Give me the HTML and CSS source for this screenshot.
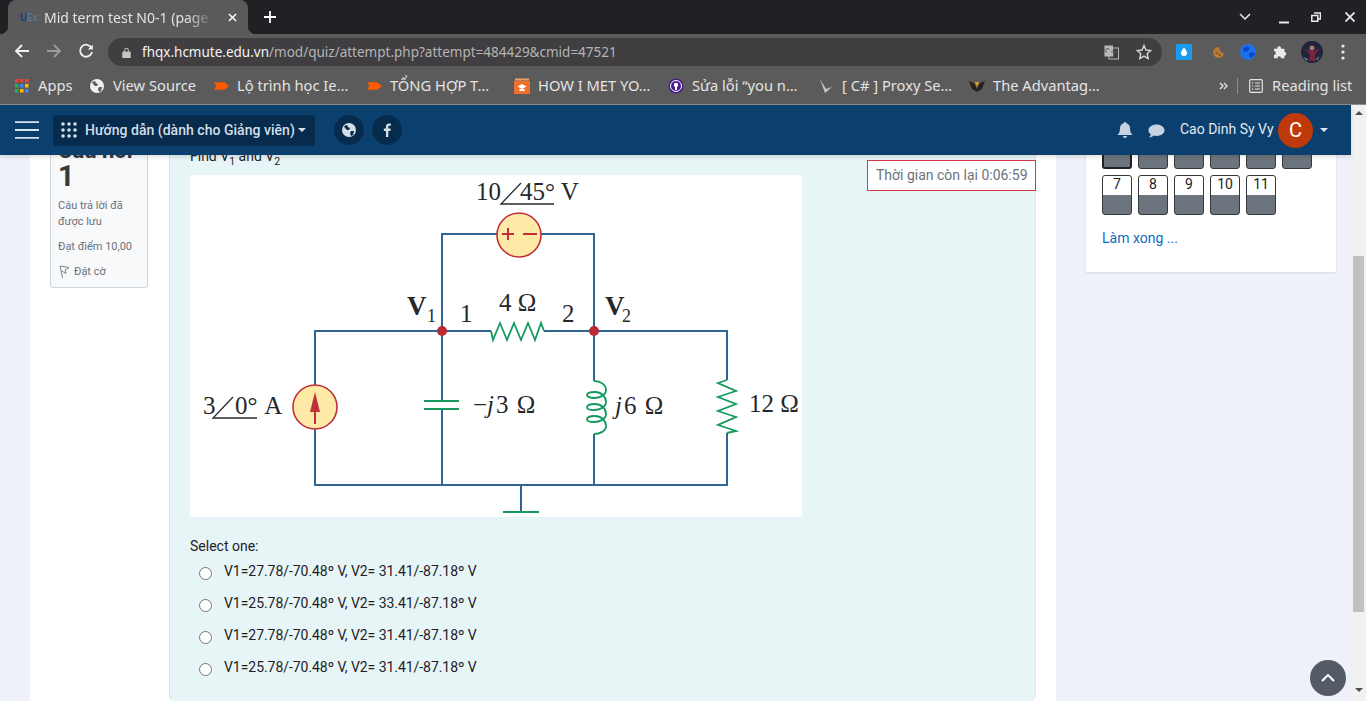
FILE: index.html
```html
<!DOCTYPE html>
<html lang="vi">
<head>
<meta charset="utf-8">
<title>Mid term test N0-1</title>
<link rel="stylesheet" href="styles.css">
</head>
<body>
<header class="browser">
  <div class="tabstrip">
    <div class="tab">
      <span class="favicon"><b>U</b><i>Ex</i></span>
      <span class="tab-title">Mid term test N0-1 (page 1 of 1)</span>
      <svg class="tab-close" viewBox="0 0 10 10"><path d="M1 1l8 8M9 1l-8 8"/></svg>
    </div>
    <svg class="new-tab" viewBox="0 0 12 12"><path d="M6 0v12M0 6h12"/></svg>
    <div class="win-controls">
      <svg class="win-chevron" viewBox="0 0 12 8"><path d="M1 1l5 5 5-5"/></svg>
      <svg class="win-min" viewBox="0 0 10 10"><path d="M0 8.5h10"/></svg>
      <svg class="win-max" viewBox="0 0 10 10"><path d="M3 1h6.5v6H7M.8 3.5h6v5.8h-6z"/></svg>
      <svg class="win-close" viewBox="0 0 10 10"><path d="M.5.5l9 9M9.500.5l-9 9"/></svg>
    </div>
  </div>
  <div class="toolbar">
    <svg class="tb-icon" viewBox="0 0 16 16"><path d="M15 8H2M8 2L2 8l6 6"/></svg>
    <svg class="tb-icon tb-dim" viewBox="0 0 16 16"><path d="M1 8h13M8 2l6 6-6 6"/></svg>
    <svg class="tb-icon" viewBox="0 0 16 16"><path d="M13.500 5A6 6 0 1 0 14 9"/><path class="solid" d="M14.800 1.500v5h-5z"/></svg>
    <div class="omnibox">
      <svg class="lock" viewBox="0 0 10 12"><path d="M1 5h8a.7.7 0 0 1 .7.700v5.600a.7.7 0 0 1-.7.700H1a.7.7 0 0 1-.7-.7V5.700A.7.7 0 0 1 1 5zM2.500 5V3.200a2.500 2.500 0 0 1 5 0V5H6.500V3.200a1.500 1.500 0 0 0-3 0V5z"/></svg>
      <span class="url"><span class="url-host">fhqx.hcmute.edu.vn</span>/mod/quiz/attempt.php?attempt=484429&amp;cmid=47521</span>
      <svg class="translate" viewBox="0 0 15 15"><rect x="5" y="3" width="9.500" height="11" fill="none" stroke="#b9b9b9"/><rect x=".5" y=".5" width="8.500" height="11" fill="#b9b9b9"/><path d="M3 7.500a2 2 0 1 1 2.500-2.500M7 7h5M9.500 6v6" fill="none" stroke="#5b5b5b"/></svg>
      <svg class="star" viewBox="0 0 16 16"><path d="M8 1.500l2 4.500 4.800.5-3.600 3.200 1 4.800L8 12.100 3.800 14.500l1-4.800L1.200 6.500 6 6z"/></svg>
    </div>
    <div class="extensions">
      <svg class="ext" viewBox="0 0 16 16"><rect width="16" height="16" rx="1.500" fill="#1b9bf0"/><path d="M8 3.500c2 2.600 3 4 3 5.500a3 3 0 0 1-6 0c0-1.500 1-2.900 3-5.500z" fill="#fff"/></svg>
      <svg class="ext ext-cookie" viewBox="0 0 16 16"><path d="M9 3a5.500 5.500 0 1 0 5 6.500L11 8 9.500 6z" fill="#b9793a"/><circle cx="6.500" cy="9" r="1" fill="#6f431a"/><circle cx="9.500" cy="11" r="1" fill="#6f431a"/></svg>
      <svg class="ext ext-globe" viewBox="0 0 16 16"><circle cx="8" cy="8" r="8" fill="#1a73e8"/><path d="M3 4l4-2 3 2-2 3-4 1zM9 9l5-1 1 3-4 3-2-2z" fill="#0d47c9"/></svg>
      <svg class="ext ext-puzzle" viewBox="0 0 16 16"><path d="M1 6h3.500a2 2 0 0 1 0-.5 2 2 0 1 1 4 0V6H12v3.300a2 2 0 1 1 0 4V16H8.500a2 2 0 1 0-4 0H1v-3.500a2 2 0 1 0 0-4z" fill="#e8eaed" transform="translate(1 -1) scale(.95)"/></svg>
      <svg class="ext ext-profile" viewBox="0 0 22 22"><circle cx="11" cy="11" r="11" fill="#20243a"/><path d="M3 8l6 2 4 0 6-3-5 6 1 7H8l1-7z" fill="#7a2540"/><circle cx="11" cy="7" r="2.500" fill="#a8796a"/><path d="M2 16l5 2-1 2zM18 15l-3 3 2 1z" fill="#6a8a9a"/></svg>
      <svg class="ext-menu" viewBox="0 0 4 16"><circle cx="2" cy="2" r="1.600"/><circle cx="2" cy="8" r="1.600"/><circle cx="2" cy="14" r="1.600"/></svg>
    </div>
  </div>
  <nav class="bookmarks">
    <div class="bm bm-apps">
      <svg class="bm-ic" viewBox="0 0 14 14"><rect width="3.500" height="3.500" fill="#ea4335"/><rect x="5" width="3.500" height="3.500" fill="#ea4335"/><rect x="10" width="3.500" height="3.500" fill="#ea4335"/><rect y="5" width="3.500" height="3.500" fill="#34a853"/><rect x="5" y="5" width="3.500" height="3.500" fill="#4285f4"/><rect x="10" y="5" width="3.500" height="3.500" fill="#fbbc05"/><rect y="10" width="3.500" height="3.500" fill="#34a853"/><rect x="5" y="10" width="3.500" height="3.500" fill="#fbbc05"/><rect x="10" y="10" width="3.500" height="3.500" fill="#4285f4"/></svg>
      <span>Apps</span>
    </div>
    <div class="bm bm-src">
      <svg class="bm-ic" viewBox="0 0 14 14"><circle cx="7" cy="7" r="7" fill="#eceff1"/><path d="M2 3l3-1 1 2 2 1-1 2H5L3 5zM9 8l3 0-1 4-2 1-1-3z" fill="#5b5b5b"/></svg>
      <span>View Source</span>
    </div>
    <div class="bm bm-lo">
      <svg class="bm-ic" viewBox="0 0 16 10"><path d="M0 1h11l5 4-5 4H0l2.500-4z" fill="#ff5a00"/></svg>
      <span>Lộ trình học Ie…</span>
    </div>
    <div class="bm bm-th">
      <svg class="bm-ic" viewBox="0 0 16 10"><path d="M0 1h11l5 4-5 4H0l2.500-4z" fill="#ff5a00"/></svg>
      <span>TỔNG HỢP T…</span>
    </div>
    <div class="bm bm-how">
      <svg class="bm-ic" viewBox="0 0 16 16"><path d="M0 3h16v13H0z" fill="#f0702a"/><path d="M1 .5h14v2H1z" fill="#f3a26b"/><path d="M8 6l4.500 2.500L8 11 3.500 8.500zM5.500 11h5v2h-5z" fill="#fff"/></svg>
      <span>HOW I MET YO…</span>
    </div>
    <div class="bm bm-fix">
      <svg class="bm-ic" viewBox="0 0 16 16"><circle cx="8" cy="8" r="7.500" fill="#4a1a8c"/><circle cx="8" cy="8" r="5.500" fill="none" stroke="#fff"/><circle cx="8" cy="7" r="2.200" fill="#fff"/><path d="M7 9h2v3H7z" fill="#fff"/></svg>
      <span>Sửa lỗi “you n…</span>
    </div>
    <div class="bm bm-proxy">
      <svg class="bm-ic" viewBox="0 0 16 16"><path d="M2 1l5 14 7-6-6 2z" fill="#c8c8c8"/></svg>
      <span>[ C# ] Proxy Se…</span>
    </div>
    <div class="bm bm-adv">
      <svg class="bm-ic" viewBox="0 0 16 16"><path d="M0 3l5 2 3 6 3-6 5-2-3 8-5 3-5-3z" fill="#2a2018"/><path d="M6 4h4l-2 5z" fill="#e0a030"/></svg>
      <span>The Advantag…</span>
    </div>
    <div class="bm-right">
      <svg class="bm-more" viewBox="0 0 9 8"><path d="M1 1l3 3-3 3M5 1l3 3-3 3"/></svg>
      <i class="bm-divider"></i>
      <svg class="bm-reading" viewBox="0 0 14 14"><rect x=".7" y=".7" width="12.600" height="12.600" rx="1"/><path d="M3 4h1.500M6 4h5M3 7h1.500M6 7h5M3 10h1.500M6 10h5"/></svg>
      <span>Reading list</span>
    </div>
  </nav>
</header>

<div class="viewport">
  <div class="site">
    <div class="navbar">
      <svg class="burger" viewBox="0 0 24 18"><path d="M0 1.200h24M0 9h24M0 16.800h24"/></svg>
      <button class="guide">
        <svg class="dots" viewBox="0 0 16 16"><circle cx="2" cy="2" r="1.800"/><circle cx="8" cy="2" r="1.800"/><circle cx="14" cy="2" r="1.800"/><circle cx="2" cy="8" r="1.800"/><circle cx="8" cy="8" r="1.800"/><circle cx="14" cy="8" r="1.800"/><circle cx="2" cy="14" r="1.800"/><circle cx="8" cy="14" r="1.800"/><circle cx="14" cy="14" r="1.800"/></svg>
        <span>Hướng dẫn (dành cho Giảng viên)</span>
        <i class="caret"></i>
      </button>
      <span class="round">
        <svg viewBox="0 0 14 14"><circle cx="7" cy="7" r="7" fill="#d3dee8"/><path d="M2 3l3-1 1 2 2 1-1 2H5L3 5zM9 8l3 0-1 4-2 1-1-3z" fill="#062b4d"/></svg>
      </span>
      <span class="round">
        <svg viewBox="0 0 10 16"><path d="M6.500 16V9h2.400l.4-2.800H6.500V4.500c0-.8.2-1.400 1.400-1.400h1.500V.6C9.100.6 8.300.5 7.300.5 5.200.5 3.800 1.800 3.800 4.100v2.100H1.400V9h2.400v7z" fill="#d3dee8"/></svg>
      </span>
      <div class="nav-right">
        <svg class="bell" viewBox="0 0 16 16"><path d="M8 0a1.200 1.200 0 0 1 1.200 1.300C11.500 1.800 13 3.700 13 6c0 4 1 5.500 2.500 7H.5C2 11.500 3 10 3 6c0-2.300 1.500-4.200 3.800-4.700A1.200 1.200 0 0 1 8 0zM6 14h4a2 2 0 0 1-4 0z"/></svg>
        <svg class="chat" viewBox="0 0 17 14"><path d="M8.500.5c4.500 0 8 2.500 8 5.700s-3.500 5.700-8 5.700c-1 0-1.900-.1-2.700-.3C4.600 12.700 3 13.500 1 13.500c1-1 1.700-2.100 1.800-3.200C1.300 9.300.5 7.800.5 6.200.5 3 4 .5 8.500.5z"/></svg>
        <span class="user">Cao Dinh Sy Vy</span>
        <span class="avatar">C</span>
        <i class="caret caret-user"></i>
      </div>
    </div>

    <main class="page">
      <section class="quiz-card">
        <aside class="qinfo">
          <h3 class="qno">Câu hỏi <span class="qno-num">1</span></h3>
          <p class="qstate">Câu trả lời đã được lưu</p>
          <p class="qgrade">Đạt điểm 10,00</p>
          <p class="qflag">
            <svg viewBox="0 0 12 14"><path d="M2 1l9 1.500-4 2.500 1 3.500L3 5.500M2 1l2.500 12"/></svg>
            <span>Đặt cờ</span>
          </p>
        </aside>
        <article class="qcontent">
          <div class="timer">Thời gian còn lại 0:06:59</div>
          <p class="qtext">Find V<sub>1</sub> and V<sub>2</sub></p>
          <svg class="circuit" viewBox="190 175 612 342">
            <path class="wire" d="M497 234H442V485M541 234H594V381M594 434V485M315 386V331H491M544 331H727V380M727 433V485H315V429M442 401V331M521 485V512"/>
            <path class="comp" d="M491 331L493 340L500 323L507 340L514 323L521 340L528 323L535 340L541 323L544 331"/>
            <path class="comp" d="M727 380L718 383L736 391L718 397L736 404L718 411L736 417L718 425L736 431L727 433"/>
            <path class="comp" d="M594 381C601 381 606 385 606 390C606 395 600 398 594 398C589 398 587 396 587 395C587 393 591 392 595 392C601 392 606 396 606 402C606 407 600 410 594 410C589 410 587 409 587 407.500C587 405 591 404 595 404C601 404 606 408 606 414C606 419 600 422 594 422C589 422 587 421 587 419.500C587 417 591 416 595 416C601 416 606 420 606 426C606 431 600 434 594 434"/>
            <path class="cap-bg" d="M442 401V409"/>
            <path class="comp" d="M424 401H459M424 409H459M503 512H539"/>
            <circle class="source" cx="519" cy="235" r="22"/>
            <path class="mark" d="M502 234H514M508 228V240M523 234H537"/>
            <circle class="source" cx="315" cy="407" r="22"/>
            <path class="mark" d="M315 405V424"/>
            <path class="arrow" d="M315 392L320 412H310z"/>
            <circle class="node" cx="442" cy="331" r="5"/>
            <circle class="node" cx="594" cy="331" r="5"/>
            <path class="phasor" d="M521 183L501 204H554M233 397L213 418H257"/>
            <text class="lbl" x="476" y="200">10</text>
            <text class="lbl" x="520" y="200">45° V</text>
            <text class="lbl lbl-b" x="407" y="315">V</text>
            <text class="lbl lbl-s" x="427" y="322">1</text>
            <text class="lbl" x="460" y="322">1</text>
            <text class="lbl" x="499" y="311">4 Ω</text>
            <text class="lbl" x="562" y="322">2</text>
            <text class="lbl lbl-b" x="605" y="315">V</text>
            <text class="lbl lbl-s" x="622" y="322">2</text>
            <text class="lbl" x="203" y="414">3</text>
            <text class="lbl lbl-a" x="235" y="414">0° A</text>
            <text class="lbl lbl-w" x="473" y="413">−<tspan class="lbl-i">j</tspan>3 Ω</text>
            <text class="lbl lbl-w" x="615" y="414"><tspan class="lbl-i">j</tspan>6 Ω</text>
            <text class="lbl" x="749" y="412">12 Ω</text>
          </svg>
          <p class="select">Select one:</p>
          <ul class="answers">
            <li><i class="radio"></i><span>V1=27.78/-70.48º V, V2= 31.41/-87.18º V</span></li>
            <li><i class="radio"></i><span>V1=25.78/-70.48º V, V2= 33.41/-87.18º V</span></li>
            <li><i class="radio"></i><span>V1=27.78/-70.48º V, V2= 31.41/-87.18º V</span></li>
            <li><i class="radio"></i><span>V1=25.78/-70.48º V, V2= 31.41/-87.18º V</span></li>
          </ul>
        </article>
      </section>
      <aside class="qnav">
        <div class="qnav-grid">
          <a class="qbtn qbtn-current"></a><a class="qbtn"></a><a class="qbtn"></a><a class="qbtn"></a><a class="qbtn"></a><a class="qbtn"></a>
          <a class="qbtn">7</a><a class="qbtn">8</a><a class="qbtn">9</a><a class="qbtn">10</a><a class="qbtn">11</a>
        </div>
        <a class="finish">Làm xong ...</a>
      </aside>
      <a class="totop"><svg viewBox="0 0 14 8"><path d="M1 7l6-6 6 6"/></svg></a>
    </main>
  </div>
  <div class="scrollbar">
    <i class="sb-up"></i>
    <i class="sb-thumb"></i>
    <i class="sb-down"></i>
  </div>
</div>
</body>
</html>
```

FILE: styles.css
```css
* { box-sizing: border-box; }
html, body { margin: 0; padding: 0; height: 701px; overflow: hidden; }
body { font-family: Roboto, "Liberation Sans", sans-serif; font-size: 14px; color: #1d2125; background: #eef1f9; }
svg { display: block; flex: none; }
p, h3, ul { margin: 0; padding: 0; }

/* browser chrome */
.browser { font-family: "Noto Sans", "Open Sans", sans-serif; color: #e8eaed; }
.tabstrip { height: 34px; background: #202124; display: flex; align-items: flex-start; padding-left: 8px; position: relative; }
.tab { position: relative; width: 240px; height: 34px; background: #5a5a5a; border-radius: 8px 8px 0 0; display: flex; align-items: center; padding-left: 12px; }
.tab::before, .tab::after { content: ""; position: absolute; bottom: 0; width: 8px; height: 8px; }
.tab::before { left: -8px; background: radial-gradient(circle at 0 0, #202124 8px, #5a5a5a 8.5px); }
.tab::after { right: -8px; background: radial-gradient(circle at 100% 0, #202124 8px, #5a5a5a 8.5px); }
.favicon { width: 16px; margin-right: 8px; font: bold 10px "Liberation Sans", sans-serif; color: #123f80; white-space: nowrap; display: flex; }
.favicon i { font-style: normal; color: #5d7590; margin-left: -1px; letter-spacing: -.5px; }
.tab-title { width: 170px; white-space: nowrap; overflow: hidden; font-size: 14px; color: #e3e3e3; -webkit-mask-image: linear-gradient(to right, #000 84%, transparent 100%); mask-image: linear-gradient(to right, #000 84%, transparent 100%); }
.tab-close { width: 9px; height: 9px; margin-left: 14px; fill: none; stroke: #fff; stroke-width: 1.600; }
.new-tab { width: 12px; height: 12px; margin: 11px 0 0 16px; fill: none; stroke: #fff; stroke-width: 1.800; }
.win-controls { margin-left: auto; display: flex; align-items: center; height: 34px; }
.win-controls svg { fill: none; stroke: #e8eaed; }
.win-chevron { width: 12px; height: 8px; margin-right: 28px; stroke-width: 1.500; }
.win-min { width: 10px; height: 10px; margin-right: 22px; stroke-width: 2; margin-top: 3px; }
.win-max { width: 10px; height: 10px; margin-right: 24px; stroke-width: 1.500; }
.win-close { width: 10px; height: 10px; margin-right: 11px; stroke-width: 1.800; }

.toolbar { height: 34px; background: #5b5b5b; display: flex; align-items: center; padding-left: 14px; }
.tb-icon { width: 16px; height: 16px; margin-right: 16px; fill: none; stroke: #f1f1f1; stroke-width: 1.800; }
.tb-icon .solid { fill: #f1f1f1; stroke: none; }
.tb-dim { stroke: #9c9c9c; }
.omnibox { width: 1054px; height: 28px; margin-left: -2px; margin-top: 2px; border-radius: 14px; background: #403e41; display: flex; align-items: center; padding-left: 14px; }
.lock { width: 9px; height: 11px; fill: #c5c5c5; margin-right: 11px; }
.url { font-size: 13.500px; color: #b4b4b4; white-space: nowrap; flex: 1; }
.url-host { color: #f3f3f3; }
.translate { width: 15px; height: 15px; margin-right: 17px; }
.star { width: 16px; height: 16px; margin-right: 10px; fill: none; stroke: #d6d6d6; stroke-width: 1.400; }
.extensions { display: flex; align-items: center; padding-left: 14px; margin-top: 2px; }
.ext { width: 16px; height: 16px; margin-right: 16px; }
.ext-cookie { margin-left: 2px; margin-right: 14px; }
.ext-globe { margin-right: 16px; }
.ext-profile { width: 22px; height: 22px; margin-left: 13px; margin-right: 18px; }
.ext-puzzle { margin-right: 0; }
.ext-menu { width: 4px; height: 16px; fill: #ececec; }

.bookmarks { height: 37px; background: #5b5b5b; border-bottom: 1px solid #8b8b8b; display: grid; grid-template-columns: 75px 124px 153px 147px 154px 150px 151px 250px 1fr; padding-left: 15px; align-items: center; font-size: 14.700px; color: #e4e4e4; }
.bookmarks span { margin-top: -2px; }
.bm { display: flex; align-items: center; gap: 8px; white-space: nowrap; }
.bm-apps, .bm-src { gap: 9px; }
.bm-ic { width: 14px; height: 14px; }
.bm-lo .bm-ic, .bm-th .bm-ic { width: 15px; height: 10px; }
.bm-how .bm-ic, .bm-fix .bm-ic, .bm-proxy .bm-ic, .bm-adv .bm-ic { width: 16px; height: 16px; }
.bm-right { display: flex; align-items: center; white-space: nowrap; }
.bm-more { width: 9px; height: 8px; fill: none; stroke: #e4e4e4; stroke-width: 1.400; margin-right: 9px; }
.bm-divider { width: 1px; height: 16px; background: #8d8d8d; margin-right: 11px; }
.bm-reading { width: 14px; height: 14px; fill: none; stroke: #e4e4e4; stroke-width: 1.200; margin-right: 9px; }

/* page */
.viewport { display: flex; height: 596px; }
.site { width: 1351px; display: flex; flex-direction: column; }
.navbar { height: 50px; flex: none; background: #0a3f6e; display: flex; align-items: center; padding-left: 15px; position: relative; z-index: 2; box-shadow: 0 2px 4px rgba(0,0,0,.12); }
.burger { width: 24px; height: 18px; fill: none; stroke: #d9e3ec; stroke-width: 1.800; margin-right: 14px; }
.guide { width: 262px; height: 31px; border: 0; border-radius: 3px; background: #062b4d; color: #d3dee8; font: 500 14px Roboto, sans-serif; letter-spacing: .03px; display: flex; align-items: center; padding: 0 0 0 8px; margin-right: 19px; }
.dots { width: 16px; height: 16px; fill: #d3dee8; margin-right: 8px; }
.caret { width: 0; height: 0; border-style: solid; border-width: 4px 4px 0; border-color: #d3dee8 transparent transparent; margin-left: 3px; }
.round { width: 30px; height: 30px; border-radius: 50%; background: #062b4d; display: flex; align-items: center; justify-content: center; margin-right: 8px; }
.round svg { width: 14px; height: 14px; }
.nav-right { margin-left: auto; display: flex; align-items: center; color: #e2e9f0; }
.bell { width: 16px; height: 16px; fill: #c5d3e0; margin-right: 15px; }
.chat { width: 17px; height: 14px; fill: #c5d3e0; margin-right: 15px; margin-top: 1px; }
.user { width: 98px; white-space: nowrap; margin-top: -2px; }
.avatar { width: 35px; height: 35px; border-radius: 50%; background: #c0390b; color: #fff; font-size: 20px; display: flex; align-items: center; justify-content: center; }
.caret-user { border-color: #e2e9f0 transparent transparent; margin: 0 23px 0 7px; }

.page { flex: 1; min-height: 0; display: flex; align-items: flex-start; padding-left: 30px; position: relative; overflow: hidden; }
.quiz-card { width: 1026px; height: 546px; background: #fff; padding: 0 20px 0 20px; display: flex; align-items: flex-start; flex: none; }
.qinfo { width: 98px; height: 159px; flex: none; margin-top: -26px; background: #f8f9fa; border: 1px solid #ced4da; border-radius: 3px; padding: 8px 7px; }
.qno { font-size: 22px; font-weight: 700; line-height: 25px; color: #343a40; }
.qno-num { display: block; font-size: 29px; line-height: 27px; }
.qstate { font-size: 11px; line-height: 16px; color: #6a737b; margin-top: 8px; }
.qgrade { font-size: 11px; line-height: 16px; color: #6a737b; margin-top: 9px; }
.qflag { font-size: 11px; line-height: 16px; color: #6a737b; margin-top: 9px; display: flex; align-items: center; gap: 4px; }
.qflag svg { width: 12px; height: 14px; fill: none; stroke: #7d858c; }
.qcontent { position: relative; width: 867px; height: 546px; margin-left: 21px; background: #e7f5f7; border-left: 1px solid #cfe3e7; border-right: 1px solid #dbeaee; border-radius: 0 0 6px 6px; padding: 0 20px; }
.timer { position: absolute; top: 5px; right: -1px; width: 169px; height: 31px; background: #fff; border: 1px solid #dc3545; color: #6a737b; font-size: 14px; line-height: 29px; padding-left: 8px; white-space: nowrap; }
.qtext { height: 20px; line-height: 16px; margin-top: -7px; font-size: 14px; white-space: nowrap; }
.qtext sub { font-size: 10.500px; line-height: 0; }
.circuit { width: 612px; height: 342px; background: #fff; margin-top: 7px; }
.wire { fill: none; stroke: #2f6594; stroke-width: 2; }
.comp { fill: none; stroke: #149a5e; stroke-width: 1.800; }
.cap-bg { stroke: #fff; stroke-width: 4; }
.source { fill: #ffe9a6; stroke: #c1303a; stroke-width: 1.600; }
.mark { fill: none; stroke: #bf2f3a; stroke-width: 2; }
.arrow { fill: #bf2f3a; }
.node { fill: #b82a36; }
.phasor { fill: none; stroke: #26282b; stroke-width: 1.300; }
.lbl { font-family: "Liberation Serif", serif; font-size: 25px; fill: #26282b; }
.lbl-b { font-weight: 700; font-size: 27px; }
.lbl-s { font-size: 18px; }
.lbl-i { font-style: italic; letter-spacing: 2px; }
.lbl-w { word-spacing: 2px; }
.lbl-a { word-spacing: 2px; }
.select { margin-top: 20px; line-height: 18px; }
.answers { list-style: none; margin-top: 1px; }
.answers li { height: 32px; display: flex; align-items: center; padding-left: 9px; white-space: nowrap; }
.radio { width: 13px; height: 13px; border-radius: 50%; background: #fff; border: 1px solid #767676; margin-right: 12px; margin-top: 3px; flex: none; }
.answers span { margin-top: -2px; letter-spacing: -.05px; }

.qnav { width: 250px; flex: none; margin-left: 30px; margin-top: -26px; background: #fff; box-shadow: 0 1px 2px rgba(0,0,0,.1); padding: 0 16px; height: 143px; }
.qnav-grid { display: grid; grid-template-columns: repeat(6, 30px); gap: 6px; }
.qbtn { height: 40px; border: 1px solid #33383d; border-radius: 3px; background: linear-gradient(#fff 50%, #6c757d 50%); text-align: center; font-size: 14px; line-height: 17px; color: #1d2125; }
.qbtn-current { border: 2px solid #1d2125; }
.finish { display: block; margin-top: 14px; color: #0f6cbf; line-height: 18px; }
.totop { position: absolute; left: 1310px; top: 505px; width: 36px; height: 36px; border-radius: 50%; background: #555b66; display: flex; align-items: center; justify-content: center; }
.totop svg { width: 14px; height: 8px; fill: none; stroke: #fff; stroke-width: 2; }

.scrollbar { width: 15px; background: #f1f1f1; position: relative; display: flex; flex-direction: column; align-items: center; }
.sb-up { width: 0; height: 0; border-style: solid; border-width: 0 4px 4px; border-color: transparent transparent #505050; margin-top: 6px; }
.sb-thumb { width: 11px; height: 356px; background: #c1c1c1; margin-top: 141px; }
.sb-down { width: 0; height: 0; border-style: solid; border-width: 4px 4px 0; border-color: #505050 transparent transparent; margin-top: 76px; }
```
